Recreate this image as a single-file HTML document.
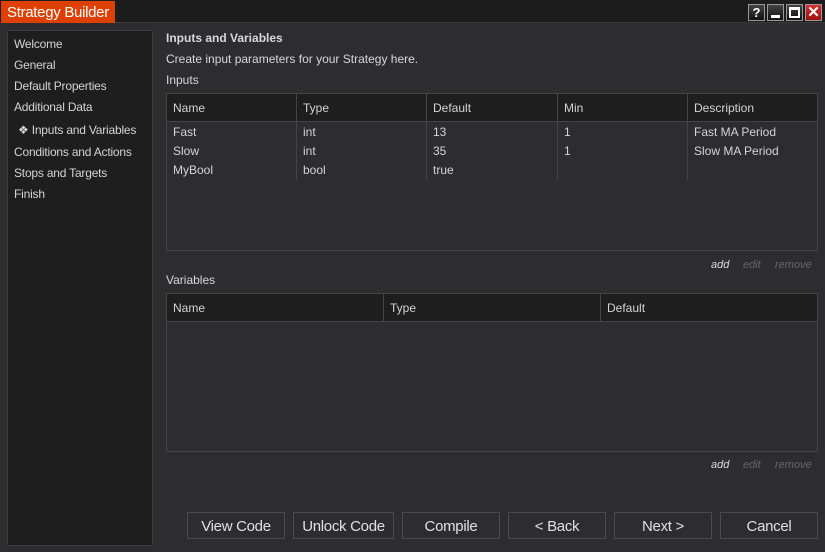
<!DOCTYPE html>
<html><head><style>
*{box-sizing:border-box;margin:0;padding:0}
body{width:825px;height:552px;background:#2d2d30;font-family:"Liberation Sans",sans-serif;font-size:12px;color:#d8d8d8;position:relative;overflow:hidden}
.abs{position:absolute}
#tb{left:0;top:0;width:825px;height:23px;background:#1c1c1c;border-bottom:1px solid #3a3a3a}
#title{left:1px;top:1px;width:114px;height:22px;background:#dd4000;color:#fff;font-size:15px;line-height:23px;padding-left:6px;letter-spacing:-0.3px}
.wb{top:4px;width:17px;height:17px;border:1px solid #999;background:linear-gradient(#444,#111)}
#side{left:7px;top:30px;width:146px;height:516px;background:#1e1e1e;border:1px solid #3a3a3a}
#side div{position:absolute;left:6px;font-size:12px;color:#d4d4d4;letter-spacing:-0.2px}
.tbl{border:1px solid #444;background:#2d2d30}
.hd{position:absolute;left:0;top:0;right:0;height:28px;background:#1e1e1e;border-bottom:1px solid #444}
.c{position:absolute;font-size:12px;color:#d4d4d4}
.vl{position:absolute;width:1px;background:#444}
.btn{position:absolute;top:512px;height:27px;border:1px solid #4a4a4a;background:#2d2d30;color:#e0e0e0;font-size:15px;text-align:center;line-height:27px;letter-spacing:-0.3px}
.lk{position:absolute;font-style:italic;font-size:11px;color:#666}
</style></head><body>
<div id="tb" class="abs"></div>
<div id="title" class="abs">Strategy Builder</div>
<div class="abs wb" style="left:748px;color:#fff;font-weight:bold;font-size:13px;text-align:center;line-height:15px">?</div>
<div class="abs wb" style="left:767px"><div class="abs" style="left:3px;top:10px;width:9px;height:3px;background:#fff"></div></div>
<div class="abs wb" style="left:786px"><div class="abs" style="left:2px;top:2px;width:11px;height:11px;border:2px solid #fff;border-top-width:3px"></div></div>
<div class="abs wb" style="left:805px;background:linear-gradient(#d83030,#a01010);color:#fff;font-weight:bold;font-size:15px;text-align:center;line-height:15px">✕</div>
<div id="side" class="abs">
<div style="top:6px">Welcome</div>
<div style="top:27px">General</div>
<div style="top:48px">Default Properties</div>
<div style="top:69px">Additional Data</div>
<div style="top:92px;left:10px">❖ Inputs and Variables</div>
<div style="top:114px">Conditions and Actions</div>
<div style="top:135px">Stops and Targets</div>
<div style="top:156px">Finish</div>
</div>
<div class="abs" style="left:166px;top:31px;font-weight:bold">Inputs and Variables</div>
<div class="abs" style="left:166px;top:52px">Create input parameters for your Strategy here.</div>
<div class="abs" style="left:166px;top:73px">Inputs</div>
<div class="abs tbl" style="left:166px;top:93px;width:652px;height:158px">
<div class="hd"></div>
<div class="vl" style="left:129px;top:0;height:86px"></div>
<div class="vl" style="left:259px;top:0;height:86px"></div>
<div class="vl" style="left:390px;top:0;height:86px"></div>
<div class="vl" style="left:520px;top:0;height:86px"></div>
<div class="c" style="left:6px;top:7px">Name</div><div class="c" style="left:136px;top:7px">Type</div><div class="c" style="left:266px;top:7px">Default</div><div class="c" style="left:397px;top:7px">Min</div><div class="c" style="left:527px;top:7px">Description</div>
<div class="c" style="left:6px;top:31px">Fast</div><div class="c" style="left:136px;top:31px">int</div><div class="c" style="left:266px;top:31px">13</div><div class="c" style="left:397px;top:31px">1</div><div class="c" style="left:527px;top:31px">Fast MA Period</div>
<div class="c" style="left:6px;top:50px">Slow</div><div class="c" style="left:136px;top:50px">int</div><div class="c" style="left:266px;top:50px">35</div><div class="c" style="left:397px;top:50px">1</div><div class="c" style="left:527px;top:50px">Slow MA Period</div>
<div class="c" style="left:6px;top:69px">MyBool</div><div class="c" style="left:136px;top:69px">bool</div><div class="c" style="left:266px;top:69px">true</div>
</div>
<div class="lk" style="left:711px;top:259px;color:#ddd">add</div><div class="lk" style="left:743px;top:259px">edit</div><div class="lk" style="left:775px;top:259px">remove</div>
<div class="abs" style="left:166px;top:273px">Variables</div>
<div class="abs tbl" style="left:166px;top:293px;width:652px;height:159px">
<div class="hd"></div>
<div class="vl" style="left:216px;top:0;height:28px"></div>
<div class="vl" style="left:433px;top:0;height:28px"></div>
<div class="c" style="left:6px;top:7px">Name</div><div class="c" style="left:223px;top:7px">Type</div><div class="c" style="left:440px;top:7px">Default</div>
</div>
<div class="lk" style="left:711px;top:459px;color:#ddd">add</div><div class="lk" style="left:743px;top:459px">edit</div><div class="lk" style="left:775px;top:459px">remove</div>
<div class="btn" style="left:187px;width:98px">View Code</div>
<div class="btn" style="left:293px;width:101px">Unlock Code</div>
<div class="btn" style="left:402px;width:98px">Compile</div>
<div class="btn" style="left:508px;width:98px">&lt; Back</div>
<div class="btn" style="left:614px;width:98px">Next &gt;</div>
<div class="btn" style="left:720px;width:98px">Cancel</div>
</body></html>
